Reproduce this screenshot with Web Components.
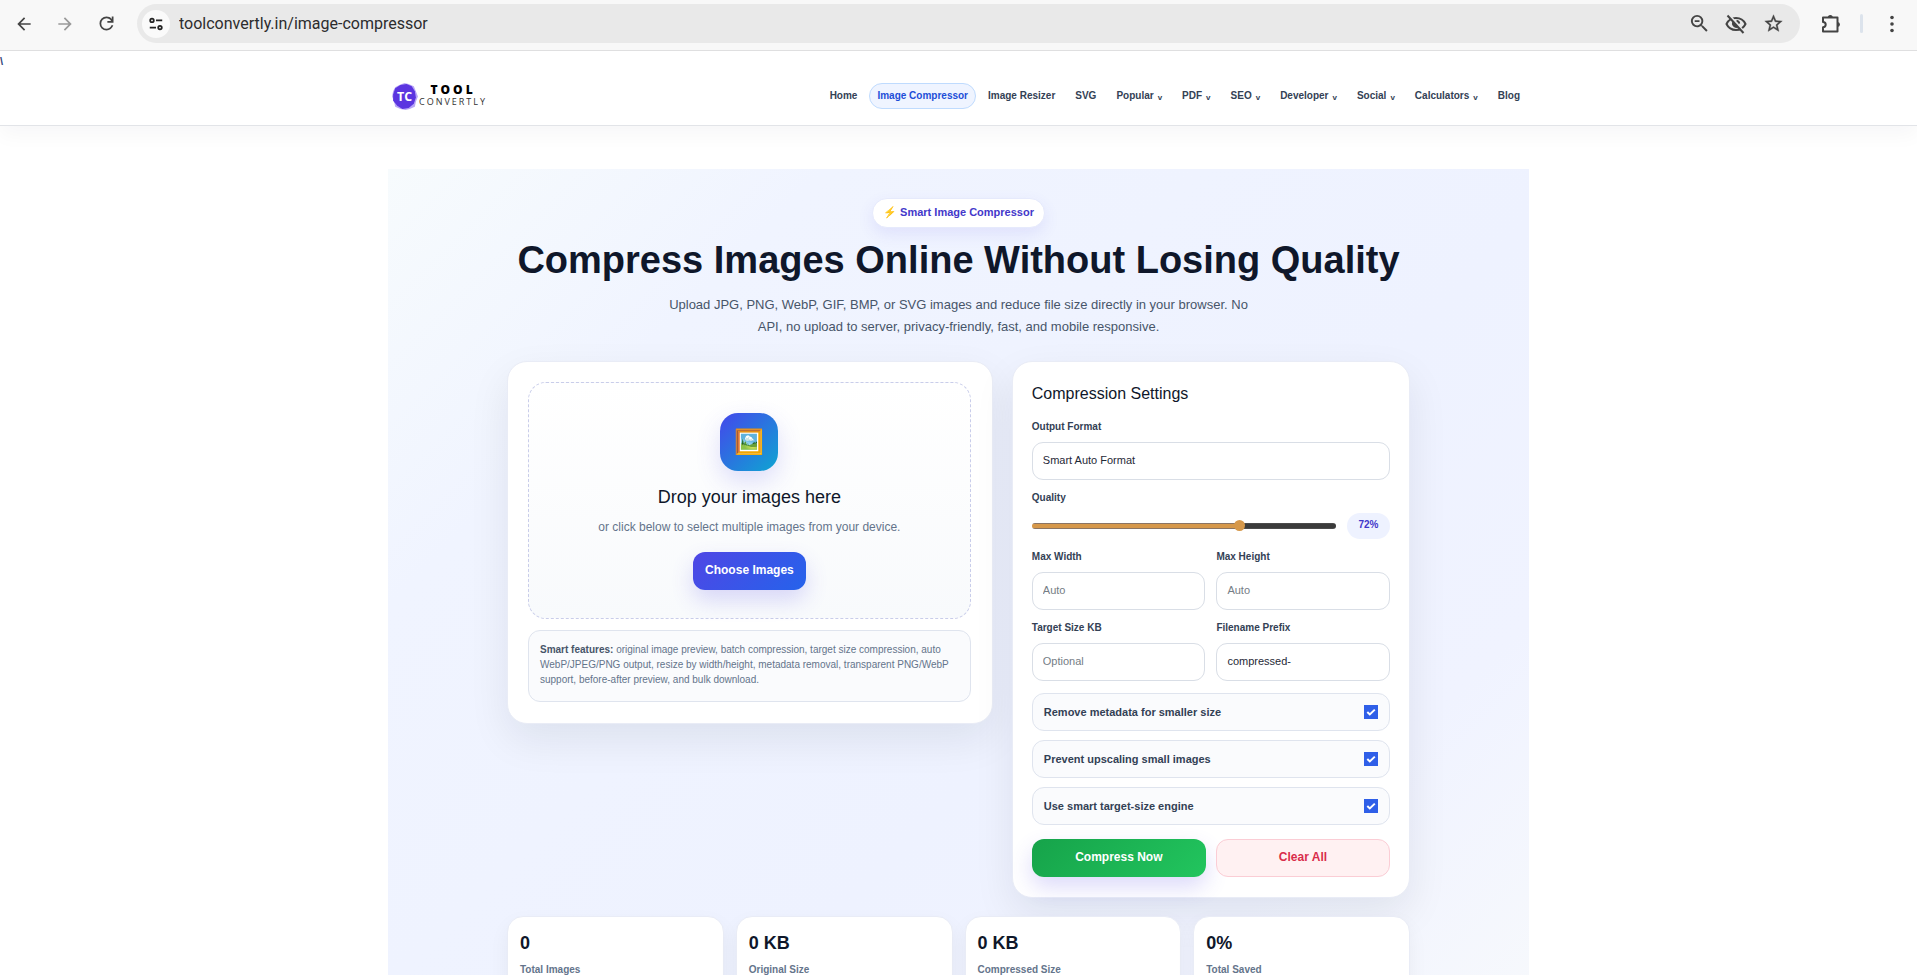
<!DOCTYPE html>
<html lang="en">
<head>
<meta charset="utf-8">
<title>Image Compressor</title>
<style>
  :root {
    --ink: #0f172a;
    --text: #334155;
    --muted: #64748b;
    --line: #dfe4ee;
    --indigo: #4f46e5;
    --blue: #2563eb;
    --shell: 1141px;
  }
  body {
    margin: 0;
    height: 100vh;
    display: flex;
    flex-direction: column;
    overflow: hidden;
    background: #fff;
    color: var(--ink);
    font-family: "Liberation Sans", Arial, sans-serif;
  }
</style>
</head>
<body>
<browser-bar url="toolconvertly.in/image-compressor"></browser-bar>
<site-page>
  <site-header>
    <nav-item>Home</nav-item>
    <nav-item active>Image Compressor</nav-item>
    <nav-item>Image Resizer</nav-item>
    <nav-item>SVG</nav-item>
    <nav-item menu>Popular</nav-item>
    <nav-item menu>PDF</nav-item>
    <nav-item menu>SEO</nav-item>
    <nav-item menu>Developer</nav-item>
    <nav-item menu>Social</nav-item>
    <nav-item menu>Calculators</nav-item>
    <nav-item>Blog</nav-item>
  </site-header>
  <tool-section>
    <tool-hero slot="hero">
      <span slot="badge">⚡ Smart Image Compressor</span>
      <span slot="title">Compress Images Online Without Losing Quality</span>
      Upload JPG, PNG, WebP, GIF, BMP, or SVG images and reduce file size directly in your browser. No API, no upload to server, privacy-friendly, fast, and mobile responsive.
    </tool-hero>
    <upload-card></upload-card>
    <settings-card></settings-card>
    <stat-card slot="stats" value="0">Total Images</stat-card>
    <stat-card slot="stats" value="0 KB">Original Size</stat-card>
    <stat-card slot="stats" value="0 KB">Compressed Size</stat-card>
    <stat-card slot="stats" value="0%">Total Saved</stat-card>
  </tool-section>
</site-page>

<script>
class BaseElement extends HTMLElement {
  connectedCallback() {
    if (this.shadowRoot) return;
    const root = this.attachShadow({ mode: "open" });
    root.innerHTML = `<style>*{box-sizing:border-box}</style>` + this.render();
  }
  render() {
    return `<slot></slot>`;
  }
}

class BrowserBar extends BaseElement {
  render() {
    return `
      <style>
        :host {
          display: flex;
          align-items: center;
          flex: none;
          box-sizing: border-box;
          height: 51px;
          padding: 4px 11px 7px 10px;
          background: #f8f8f8;
          border-bottom: 1px solid #dfdfe0;
        }
        button {
          display: grid;
          place-items: center;
          width: 28px;
          height: 28px;
          padding: 0;
          border: 0;
          border-radius: 50%;
          background: none;
          color: #444;
        }
        svg { display: block; fill: currentColor; }
        .nav { display: flex; gap: 13px; margin-right: 17px; }
        .nav button:disabled { color: #999; }
        .omnibox {
          flex: 1;
          display: flex;
          align-items: center;
          gap: 9px;
          height: 39px;
          padding: 0 13px 0 5px;
          border-radius: 20px;
          background: #e9e9e9;
        }
        .omnibox .site { background: #fafafa; color: #222; }
        input {
          flex: 1;
          min-width: 0;
          padding: 0;
          border: 0;
          outline: 0;
          background: none;
          color: #2c2c2e;
          font: 16px/24px Roboto, sans-serif;
        }
        .actions { display: flex; gap: 9px; }
        .tail { display: flex; align-items: center; gap: 15px; margin-left: 17px; }
        .sep { width: 3px; height: 19px; border-radius: 2px; background: #dce3ec; }
      </style>
      <div class="nav">
        <button aria-label="Back"><svg width="20" height="20" viewBox="0 0 24 24"><path d="M20 11H7.83l5.59-5.59L12 4l-8 8 8 8 1.41-1.41L7.83 13H20v-2z"/></svg></button>
        <button aria-label="Forward" disabled><svg width="20" height="20" viewBox="0 0 24 24"><path d="M4 11h12.17l-5.59-5.59L12 4l8 8-8 8-1.41-1.41L16.17 13H4v-2z"/></svg></button>
        <button aria-label="Reload"><svg width="21" height="21" viewBox="0 0 24 24"><path d="M12 20q-3.35 0-5.67-2.33Q4 15.35 4 12t2.33-5.67Q8.65 4 12 4q1.73 0 3.3.71 1.57.71 2.7 2.04V4h2v7h-7V9h4.2q-.8-1.4-2.19-2.2Q13.63 6 12 6 9.5 6 7.75 7.75T6 12t1.75 4.25T12 18q1.93 0 3.48-1.1Q17.02 15.8 17.65 14h2.1q-.7 2.65-2.85 4.33Q14.75 20 12 20z"/></svg></button>
      </div>
      <div class="omnibox">
        <button class="site" aria-label="Site information"><svg width="16" height="16" viewBox="0 0 18 18" style="fill:none" stroke="currentColor" stroke-width="2"><circle cx="4.500" cy="5" r="2"/><path d="M9 5h7M2 13h7"/><circle cx="13.500" cy="13" r="2"/></svg></button>
        <input type="text" aria-label="Address" value="${this.getAttribute("url")}">
        <div class="actions">
          <button aria-label="Zoom"><svg width="23" height="23" viewBox="0 0 24 24"><path d="M15.500 14h-.79l-.28-.27A6.470 6.470 0 0 0 16 9.500 6.500 6.500 0 1 0 9.500 16c1.610 0 3.090-.59 4.230-1.570l.27.28v.79l5 4.990L20.490 19l-4.990-5zm-6 0C7.010 14 5 11.990 5 9.500S7.010 5 9.500 5 14 7.010 14 9.500 11.990 14 9.500 14zM7 8.500h5v2H7z"/></svg></button>
          <button aria-label="Tracking protection"><svg width="24" height="24" viewBox="0 0 24 24" style="fill:none" stroke="currentColor" stroke-width="2"><path d="M2.500 12C4.300 8.200 7.800 6 12 6s7.700 2.200 9.500 6c-1.800 3.800-5.300 6-9.500 6s-7.700-2.200-9.500-6z"/><path d="M8.500 9.500a4.300 4.300 0 0 0 5.800 5.800z" fill="currentColor" stroke="none"/><path d="M12.500 8.800a3.200 3.200 0 0 1 2.700 2.900"/><path d="M5.200 2.800l15 17" stroke="#e9e9e9" stroke-width="2"/><path d="M3.500 3.500l16 17.500"/></svg></button>
          <button aria-label="Bookmark"><svg width="21" height="21" viewBox="0 0 24 24" stroke="currentColor" stroke-width=".4"><path d="M22 9.240l-7.190-.62L12 2 9.190 8.630 2 9.240l5.460 4.730L5.820 21 12 17.270 18.180 21l-1.630-7.030L22 9.240zM12 15.400l-3.760 2.270 1-4.280-3.320-2.880 4.380-.38L12 6.100l1.710 4.040 4.380.38-3.320 2.880 1 4.280L12 15.400z"/></svg></button>
        </div>
      </div>
      <div class="tail">
        <button aria-label="Extensions"><svg width="22" height="22" viewBox="0 0 22 22"><path d="M3 4.500h14.500v14H3v-4.200a2.700 2.700 0 0 0 0-5.400z" fill="none" stroke="currentColor" stroke-width="2" stroke-linejoin="round"/><path d="M7.800 4.500a2.500 2.500 0 0 1 5 0zM17.500 9a2.500 2.500 0 0 1 0 5z"/></svg></button>
        <span class="sep"></span>
        <button aria-label="Menu"><svg width="20" height="20" viewBox="0 0 20 20"><circle cx="10" cy="3.500" r="1.800"/><circle cx="10" cy="10" r="1.800"/><circle cx="10" cy="16.500" r="1.800"/></svg></button>
      </div>`;
  }
}

class SitePage extends BaseElement {
  render() {
    return `
      <style>
        :host {
          display: block;
          position: relative;
          flex: 1;
          min-height: 0;
          overflow: hidden;
        }
        .stray {
          position: absolute;
          z-index: 2;
          left: 0;
          top: 4px;
          font-size: 11px;
          line-height: 12px;
          font-weight: 700;
          color: #33477a;
        }
      </style>
      <span class="stray">\\</span>
      <slot></slot>`;
  }
}

class SiteHeader extends BaseElement {
  render() {
    return `
      <style>
        :host {
          display: block;
          border-bottom: 1px solid #e2e4e8;
          box-shadow: 0 8px 20px rgba(15, 23, 42, .04);
        }
        .inner {
          display: flex;
          align-items: center;
          justify-content: space-between;
          width: min(100%, var(--shell));
          height: 74px;
          margin: 0 auto;
          padding: 16px 1px 0 2px;
        }
        .logo { display: flex; align-items: center; text-decoration: none; color: #111; }
        .logo svg { display: block; }
        .words { display: grid; justify-items: center; font-family: "Open Sans", sans-serif; }
        .words b { font-size: 12px; line-height: 12px; font-weight: 800; letter-spacing: 3px; color: #000; }
        .words span { font-size: 9px; line-height: 12px; letter-spacing: 2px; color: #333; }
        nav { display: flex; gap: 4px; }
      </style>
      <div class="inner">
        <a class="logo" href="#">
          <svg width="29" height="29" viewBox="1 0 26 28" role="img" aria-label="TC">
            <path d="M9 3l5-2 4 1 5 2 2 5 2 5-2 5-1 5-5 2-4 1-5-1-5-2-1-5-2-5 1-5 2-4z" fill="#8b6cf0" opacity=".6"/>
            <path d="M10 3l6-1 5 2 3 5 1 6-2 6-5 4-6 1-5-3-4-5v-6l2-6z" fill="#5b35e0"/>
            <text x="14" y="18" text-anchor="middle" font-family="Open Sans" font-weight="700" font-size="12" fill="#fff">TC</text>
          </svg>
          <span class="words"><b>TOOL</b><span>CONVERTLY</span></span>
        </a>
        <nav><slot></slot></nav>
      </div>`;
  }
}

class NavItem extends BaseElement {
  render() {
    const caret = this.hasAttribute("menu") ? `<span class="caret">v</span>` : "";
    return `
      <style>
        :host { display: block; }
        a {
          display: flex;
          align-items: center;
          gap: 4px;
          height: 26px;
          padding: 0 7px;
          border: 1px solid transparent;
          border-radius: 13px;
          color: var(--text);
          font-size: 10px;
          line-height: 12px;
          font-weight: 700;
          text-decoration: none;
          white-space: nowrap;
        }
        :host([active]) a { background: #eff4ff; border-color: #bfdbfe; color: #1d4ed8; }
        .caret { font-size: 8px; padding-top: 3px; }
      </style>
      <a href="#"><slot></slot>${caret}</a>`;
  }
}

class ToolSection extends BaseElement {
  render() {
    return `
      <style>
        :host {
          display: block;
          box-sizing: border-box;
          width: min(100%, var(--shell));
          margin: 43px auto 0;
          padding: 29px 16px;
          background: linear-gradient(135deg, #f7fbfd, #f0f4ff 22%, #eef2ff 60%, #f0f3ff 80%, #f7f9fc);
        }
        .inner { max-width: 903px; margin: 0 auto; }
        .work { display: grid; grid-template-columns: 1.22fr 1fr; align-items: start; gap: 19px; margin-top: 23px; }
        .stats { display: grid; grid-template-columns: repeat(4, 1fr); gap: 12px; margin-top: 18px; }
      </style>
      <div class="inner">
        <slot name="hero"></slot>
        <div class="work"><slot></slot></div>
        <div class="stats"><slot name="stats"></slot></div>
      </div>`;
  }
}

class ToolHero extends BaseElement {
  render() {
    return `
      <style>
        :host { display: flex; flex-direction: column; align-items: center; text-align: center; }
        .badge {
          padding: 6px 10px 8px;
          border: 1px solid #e6eafc;
          border-radius: 16px;
          background: #fff;
          box-shadow: 0 6px 16px rgba(79, 70, 229, .1);
          color: #4338ca;
          font-size: 11px;
          line-height: 14px;
          font-weight: 700;
        }
        h1 { margin: 10px 0 12px; font-size: 38px; line-height: 44px; font-weight: 700; }
        p { max-width: 600px; margin: 0; color: #475569; font-size: 13px; line-height: 22px; }
      </style>
      <div class="badge"><slot name="badge"></slot></div>
      <h1><slot name="title"></slot></h1>
      <p><slot></slot></p>`;
  }
}

const cardStyle = `
  :host {
    display: block;
    box-sizing: border-box;
    border: 1px solid #e9ecf6;
    border-radius: 20px;
    background: #fff;
    box-shadow: 0 16px 40px rgba(15, 23, 42, .08);
  }`;

class ToolButton extends BaseElement {
  render() {
    return `
      <style>
        :host { display: block; }
        button {
          width: 100%;
          height: 38px;
          padding: 0 12px 2px;
          border: 0;
          border-radius: 12px;
          background: linear-gradient(135deg, var(--indigo), var(--blue));
          box-shadow: 0 10px 22px rgba(79, 70, 229, .2);
          color: #fff;
          font: 700 12px/16px "Liberation Sans", Arial, sans-serif;
        }
        :host([kind="go"]) button { background: linear-gradient(135deg, #16a34a, #22c55e); }
        :host([kind="clear"]) button {
          border: 1px solid #fbcdd5;
          background: #fff1f2;
          box-shadow: none;
          color: #d92d4b;
        }
      </style>
      <button type="button"><slot></slot></button>`;
  }
}

class UploadCard extends BaseElement {
  render() {
    return `
      <style>
        ${cardStyle}
        :host { padding: 20px 21px 21px 20px; }
        .drop {
          display: flex;
          flex-direction: column;
          align-items: center;
          padding: 30px 16px 28px;
          border: 1px dashed #c9cdea;
          border-radius: 18px;
          background: linear-gradient(#fff, #f8fafc);
        }
        .icon {
          display: grid;
          place-items: center;
          width: 58px;
          height: 58px;
          border-radius: 18px;
          background: linear-gradient(135deg, #4447eb, #0ea5d2);
          box-shadow: 0 10px 24px rgba(79, 70, 229, .18);
          font-size: 24px;
          line-height: 28px;
        }
        h2 { margin: 14px 0 9px; font-size: 18px; line-height: 24px; font-weight: 400; }
        p { margin: 0 0 16px; color: var(--muted); font-size: 12px; line-height: 18px; }
        .note {
          margin-top: 11px;
          padding: 11px 11px 14px;
          border: 1px solid var(--line);
          border-radius: 12px;
          background: #fafbfd;
          color: var(--muted);
          font-size: 10px;
          line-height: 15px;
        }
        .note strong { color: #475569; }
      </style>
      <div class="drop">
        <div class="icon">🖼️</div>
        <h2>Drop your images here</h2>
        <p>or click below to select multiple images from your device.</p>
        <tool-button>Choose Images</tool-button>
      </div>
      <div class="note"><strong>Smart features:</strong> original image preview, batch compression, target size compression, auto WebP/JPEG/PNG output, resize by width/height, metadata removal, transparent PNG/WebP support, before-after preview, and bulk download.</div>`;
  }
}

class FormField extends BaseElement {
  render() {
    const label = this.getAttribute("label");
    const value = this.getAttribute("value") || "";
    const hint = this.getAttribute("placeholder") || "";
    const control = this.hasAttribute("options")
      ? `<select id="control">${this.getAttribute("options").split("|").map(o => `<option>${o}</option>`).join("")}</select>`
      : `<input id="control" type="text" value="${value}" placeholder="${hint}">`;
    return `
      <style>
        :host { display: block; min-width: 0; }
        label { display: block; margin-bottom: 9px; color: var(--text); font-size: 10px; line-height: 12px; font-weight: 700; }
        input, select {
          display: block;
          appearance: none;
          width: 100%;
          height: 38px;
          margin: 0;
          padding: 0 10px 2px;
          border: 1px solid #d9dee6;
          border-radius: 11px;
          background: #fff;
          color: #1f2937;
          font: 11px/16px "Liberation Sans", Arial, sans-serif;
        }
        input::placeholder { color: #757d85; }
      </style>
      <label for="control">${label}</label>
      ${control}`;
  }
}

class QualityField extends BaseElement {
  connectedCallback() {
    super.connectedCallback();
    const range = this.shadowRoot.querySelector("input");
    const output = this.shadowRoot.querySelector("output");
    const update = () => {
      const share = (range.value - range.min) / (range.max - range.min);
      range.style.setProperty("--fill", share * 100 + "%");
      output.textContent = range.value + "%";
    };
    range.addEventListener("input", update);
    update();
  }
  render() {
    return `
      <style>
        :host { display: block; }
        label { display: block; margin-bottom: 9px; color: var(--text); font-size: 10px; line-height: 12px; font-weight: 700; }
        .row { display: flex; align-items: center; gap: 11px; }
        input { appearance: none; flex: 1; min-width: 0; height: 12px; margin: 0; background: none; }
        input::-webkit-slider-runnable-track {
          height: 6px;
          border-radius: 3px;
          background:
            linear-gradient(90deg, #d6984a var(--fill), #3b3b3b var(--fill)) 0 1px / 100% 4px no-repeat,
            linear-gradient(90deg, #8b7563 var(--fill), #4b4b4b var(--fill));
        }
        input::-webkit-slider-thumb {
          appearance: none;
          width: 11px;
          height: 11px;
          margin-top: -3px;
          border-radius: 50%;
          background: #d6984a;
        }
        output {
          width: 43px;
          height: 26px;
          border-radius: 13px;
          background: #eef2ff;
          color: #4338ca;
          font-size: 10px;
          line-height: 24px;
          font-weight: 700;
          text-align: center;
        }
      </style>
      <label for="range">Quality</label>
      <div class="row">
        <input id="range" type="range" min="10" max="100" value="72">
        <output for="range"></output>
      </div>`;
  }
}

class CheckRow extends BaseElement {
  render() {
    return `
      <style>
        :host { display: block; }
        label {
          display: flex;
          align-items: center;
          justify-content: space-between;
          height: 38px;
          padding: 0 11px;
          border: 1px solid var(--line);
          border-radius: 12px;
          background: #fafbfd;
          color: var(--text);
          font-size: 11px;
          line-height: 14px;
          font-weight: 700;
        }
        .tick { display: grid; }
        .tick > * { grid-area: 1 / 1; }
        input { appearance: none; width: 14px; height: 14px; margin: 0; border: 1px solid #94a3b8; }
        input:checked { border: 0; background: #2f5fe8; }
        svg { pointer-events: none; fill: none; stroke: #fff; stroke-width: 2; }
        input:not(:checked) + svg { visibility: hidden; }
      </style>
      <label><slot></slot>
        <span class="tick"><input type="checkbox" checked><svg width="14" height="14" viewBox="0 0 14 14"><path d="M3.300 7l2.500 2.400 5-4.800"/></svg></span>
      </label>`;
  }
}

class SettingsCard extends BaseElement {
  render() {
    return `
      <style>
        ${cardStyle}
        :host { padding: 20px 19px; }
        h2 { margin: 0 0 15px; font-size: 16px; line-height: 24px; font-weight: 400; }
        form { display: grid; gap: 12px; }
        .pair { display: grid; grid-template-columns: 1fr 1fr; gap: 12px 11px; }
        .checks { display: grid; gap: 9px; }
        .buttons { display: grid; grid-template-columns: 1fr 1fr; gap: 10px; margin-top: 2px; }
      </style>
      <h2>Compression Settings</h2>
      <form>
        <form-field label="Output Format" options="Smart Auto Format|WebP|JPEG|PNG"></form-field>
        <quality-field></quality-field>
        <div class="pair">
          <form-field label="Max Width" placeholder="Auto"></form-field>
          <form-field label="Max Height" placeholder="Auto"></form-field>
          <form-field label="Target Size KB" placeholder="Optional"></form-field>
          <form-field label="Filename Prefix" value="compressed-"></form-field>
        </div>
        <div class="checks">
          <check-row>Remove metadata for smaller size</check-row>
          <check-row>Prevent upscaling small images</check-row>
          <check-row>Use smart target-size engine</check-row>
        </div>
        <div class="buttons">
          <tool-button kind="go">Compress Now</tool-button>
          <tool-button kind="clear">Clear All</tool-button>
        </div>
      </form>`;
  }
}

class StatCard extends BaseElement {
  render() {
    return `
      <style>
        ${cardStyle}
        :host { padding: 14px 12px; border-radius: 16px; box-shadow: 0 8px 20px rgba(15, 23, 42, .05); }
        strong { display: block; margin-bottom: 9px; font-size: 18px; line-height: 24px; }
        span { display: block; color: var(--muted); font-size: 10px; line-height: 12px; font-weight: 700; }
      </style>
      <strong>${this.getAttribute("value")}</strong>
      <span><slot></slot></span>`;
  }
}

customElements.define("browser-bar", BrowserBar);
customElements.define("site-page", SitePage);
customElements.define("site-header", SiteHeader);
customElements.define("nav-item", NavItem);
customElements.define("tool-section", ToolSection);
customElements.define("tool-hero", ToolHero);
customElements.define("tool-button", ToolButton);
customElements.define("upload-card", UploadCard);
customElements.define("form-field", FormField);
customElements.define("quality-field", QualityField);
customElements.define("check-row", CheckRow);
customElements.define("settings-card", SettingsCard);
customElements.define("stat-card", StatCard);
</script>
</body>
</html>
